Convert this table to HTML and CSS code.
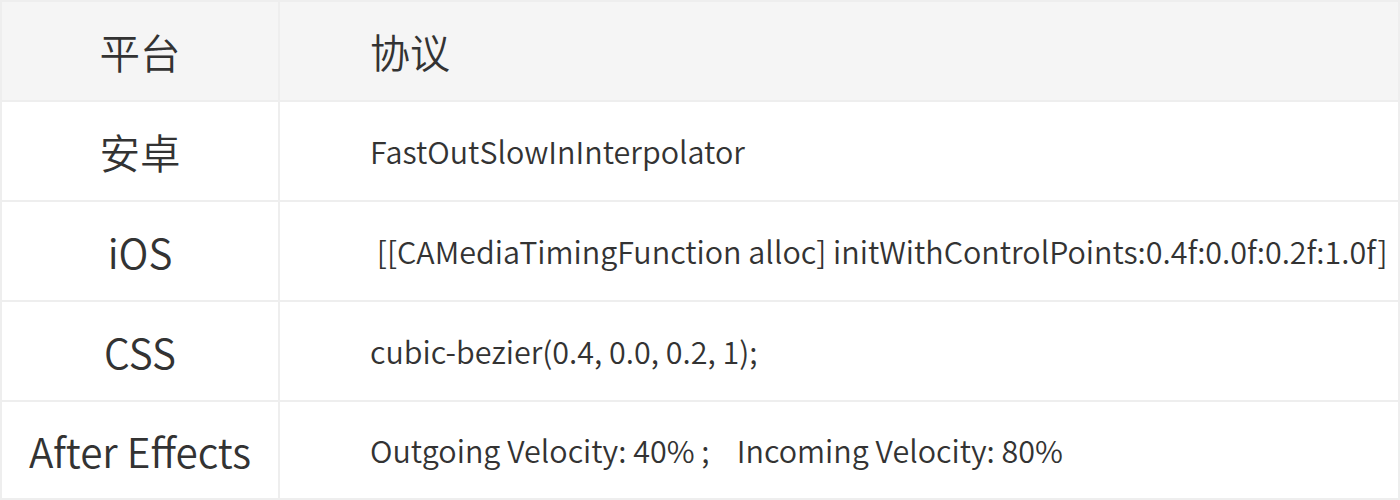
FILE: index.html
```html
<!DOCTYPE html>
<html lang="zh">
<head>
<meta charset="utf-8">
<link rel="stylesheet" href="styles.css">
</head>
<body>
<table class="spec">
  <thead>
    <tr><th class="plat">平台</th><th class="proto">协议</th></tr>
  </thead>
  <tbody>
    <tr><td class="plat">安卓</td><td class="proto">FastOutSlowInInterpolator</td></tr>
    <tr><td class="plat">iOS</td><td class="proto">&nbsp;[[CAMediaTimingFunction alloc] initWithControlPoints:0.4f:0.0f:0.2f:1.0f]</td></tr>
    <tr><td class="plat">CSS</td><td class="proto">cubic-bezier(0.4, 0.0, 0.2, 1);</td></tr>
    <tr class="last"><td class="plat">After Effects</td><td class="proto">Outgoing Velocity: 40% ;&nbsp;&nbsp;&nbsp; Incoming Velocity: 80%</td></tr>
  </tbody>
</table>
</body>
</html>
```
FILE: styles.css
```css
html, body {
  margin: 0;
  padding: 0;
  background: #fff;
}
.spec {
  border-collapse: collapse;
  width: 1400px;
  font-family: "Noto Sans CJK SC", "Noto Sans", sans-serif;
  color: #333;
}
.spec th, .spec td {
  border: 2px solid #eeeeee;
  height: 98px;
  padding: 0;
  font-weight: 350;
  white-space: nowrap;
}
.spec .last td {
  height: 96px;
}
.spec thead th {
  background: #f5f5f5;
}
.plat {
  width: 276px;
  text-align: center;
  font-size: 40.5px;
}
.proto {
  text-align: left;
  padding-left: 90px !important;
  font-size: 30.5px;
}
.spec thead .proto {
  font-size: 40px;
}
```
